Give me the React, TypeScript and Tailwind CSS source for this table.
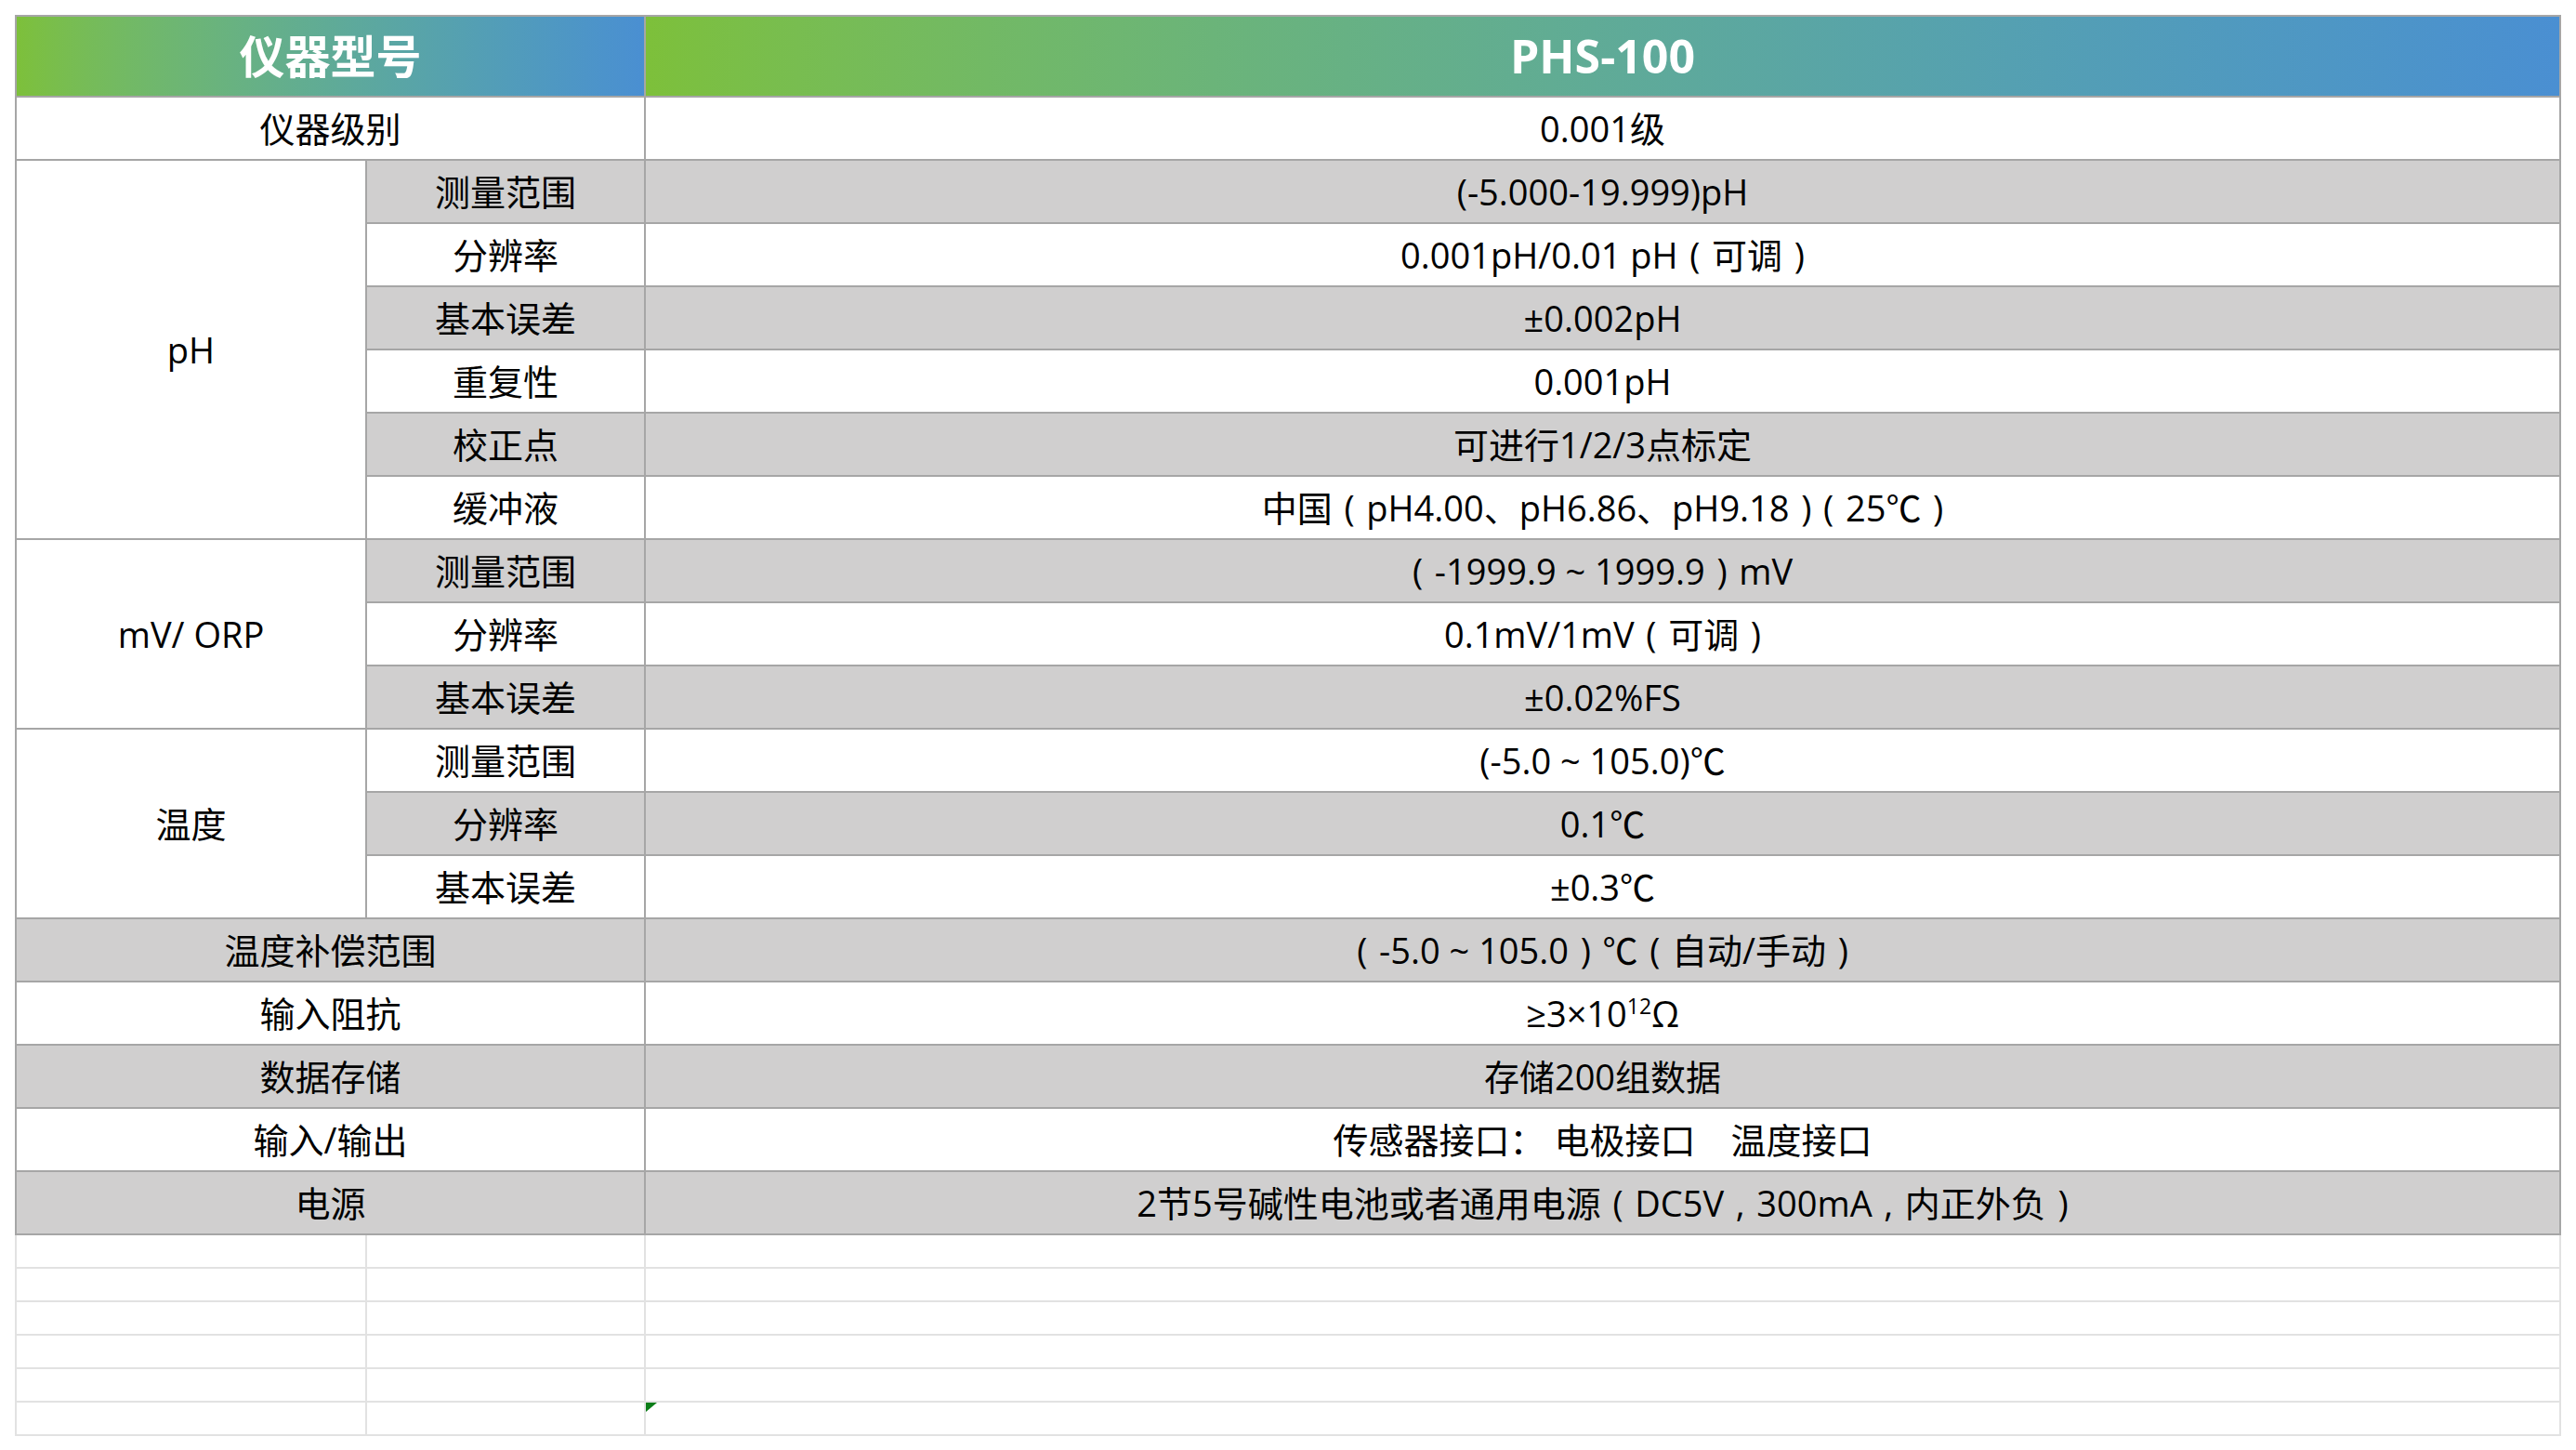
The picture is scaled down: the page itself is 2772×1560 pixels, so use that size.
import React from 'react';

type Row = { label?: string; sub?: string; value: React.ReactNode; gray: boolean };

const font = "font-['Open_Sans','Noto_Sans_CJK_SC',sans-serif]";

// three-per-em space, to get the spacing round brackets and commas have in the sheet
const s = '\u2004';

const groups: { name: string; rows: Row[] }[] = [
  {
    name: 'pH',
    rows: [
      { sub: '测量范围', value: '(-5.000-19.999)pH', gray: true },
      { sub: '分辨率', value: `0.001pH/0.01 pH${s}(${s}可调${s})`, gray: false },
      { sub: '基本误差', value: '±0.002pH', gray: true },
      { sub: '重复性', value: '0.001pH', gray: false },
      { sub: '校正点', value: '可进行1/2/3点标定', gray: true },
      { sub: '缓冲液', value: `中国${s}(${s}pH4.00、pH6.86、pH9.18${s})${s}(${s}25℃${s})`, gray: false },
    ],
  },
  {
    name: 'mV/ ORP',
    rows: [
      { sub: '测量范围', value: `(${s}-1999.9 ~ 1999.9${s})${s}mV`, gray: true },
      { sub: '分辨率', value: `0.1mV/1mV${s}(${s}可调${s})`, gray: false },
      { sub: '基本误差', value: '±0.02%FS', gray: true },
    ],
  },
  {
    name: '温度',
    rows: [
      { sub: '测量范围', value: '(-5.0 ~ 105.0)℃', gray: false },
      { sub: '分辨率', value: '0.1℃', gray: true },
      { sub: '基本误差', value: '±0.3℃', gray: false },
    ],
  },
];

const singles: Row[] = [
  { label: '温度补偿范围', value: `(${s}-5.0 ~ 105.0${s})${s}℃${s}(${s}自动/手动${s})`, gray: true },
  {
    label: '输入阻抗',
    value: (
      <span>
        ≥3×10<span className="text-[23px] relative top-[-14px]">12</span>Ω
      </span>
    ),
    gray: false,
  },
  { label: '数据存储', value: '存储200组数据', gray: true },
  { label: '输入/输出', value: '传感器接口： 电极接口　温度接口', gray: false },
  { label: '电源', value: `2节5号碱性电池或者通用电源${s}(${s}DC5V${s},${s}300mA${s},${s}内正外负${s})`, gray: true },
];

const cell = 'flex items-center justify-center border-r-2 border-b-2 border-[#a6a6a6] text-[38px] text-black whitespace-pre';

export default function App() {
  return (
    <div className={`min-h-[1560px] bg-white pt-[16px] pl-[16px] ${font}`}>
      <div className="w-[2740px] grid grid-cols-[377px_300px_1fr] grid-rows-[87px_repeat(18,68px)] border-l-2 border-t-2 border-[#a6a6a6]">
        <div className="col-span-2 flex items-center justify-center border-r-2 border-b-2 border-[#a6a6a6] bg-gradient-to-r from-[#7dc03a] to-[#4a8fd2] text-white text-[49px] font-bold">
          仪器型号
        </div>
        <div className="flex items-center justify-center border-r-2 border-b-2 border-[#a6a6a6] bg-gradient-to-r from-[#7dc03a] to-[#4a8fd2] text-white text-[50px] font-bold">
          PHS-100
        </div>

        <div className={`${cell} col-span-2 bg-white`}>仪器级别</div>
        <div className={`${cell} bg-white`}>0.001级</div>

        {groups.map((g) => (
          <React.Fragment key={g.name}>
            <div
              className={`${cell} bg-white`}
              style={{ gridRow: `span ${g.rows.length}` }}
            >
              {g.name}
            </div>
            {g.rows.map((r, i) => (
              <React.Fragment key={i}>
                <div className={`${cell} ${r.gray ? 'bg-[#d0cfcf]' : 'bg-white'}`}>{r.sub}</div>
                <div className={`${cell} ${r.gray ? 'bg-[#d0cfcf]' : 'bg-white'}`}>{r.value}</div>
              </React.Fragment>
            ))}
          </React.Fragment>
        ))}

        {singles.map((r) => (
          <React.Fragment key={r.label}>
            <div className={`${cell} col-span-2 ${r.gray ? 'bg-[#d0cfcf]' : 'bg-white'}`}>{r.label}</div>
            <div className={`${cell} ${r.gray ? 'bg-[#d0cfcf]' : 'bg-white'}`}>{r.value}</div>
          </React.Fragment>
        ))}
      </div>

      <div className="w-[2740px] grid grid-cols-[377px_300px_1fr] auto-rows-[36px] border-l-2 border-[#e2e2e2]">
        {Array.from({ length: 18 }).map((_, i) => (
          <div key={i} className="relative border-r-2 border-b-2 border-[#e2e2e2]">
            {i === 17 && (
              <svg className="absolute left-0 top-0" width="12" height="10" viewBox="0 0 12 10">
                <polygon points="0,0 12,0 0,10" fill="#0b7d18" />
              </svg>
            )}
          </div>
        ))}
      </div>
    </div>
  );
}
